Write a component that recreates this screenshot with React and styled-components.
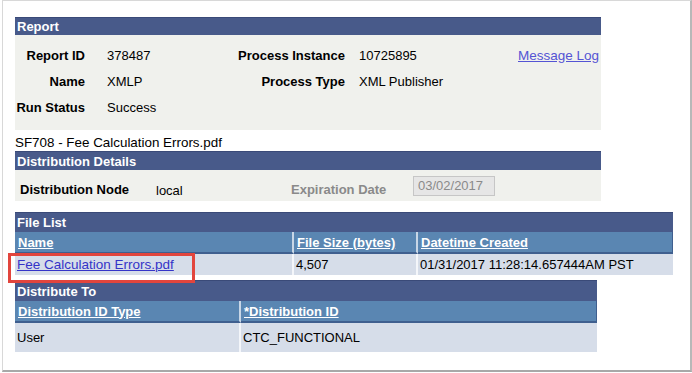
import React from "react";
import styled, { createGlobalStyle } from "styled-components";

const Global = createGlobalStyle`
  html, body { margin: 0; padding: 0; background: #ffffff; }
  body { font-family: "Liberation Sans", Arial, sans-serif; font-size: 13px; color: #000; }
`;

const Frame = styled.div`
  box-sizing: border-box;
  width: 690px;
  height: 372px;
  margin-left: 2px;
  border: 1px solid #d8d8d8;
  border-right: 2px solid #b8b8b8;
  border-bottom: 2px solid #a8a8a8;
  padding: 16px 0 0 12px;
  display: flex;
  flex-direction: column;
  position: relative;
`;

const Section = styled.div`
  width: ${(p) => p.$w}px;
`;

const Bar = styled.div`
  box-sizing: border-box;
  height: ${(p) => p.$h || 19}px;
  background: #485a8a;
  border-top: 1px solid #3a4a78;
  color: #ffffff;
  font-weight: bold;
  padding-left: 2px;
  display: flex;
  align-items: center;
`;

const Panel = styled.div`
  background: #f0f1ed;
  padding: ${(p) => p.$pad || "0"};
`;

const InfoGrid = styled.div`
  display: grid;
  grid-template-columns: 70px 122px 138px 173px auto;
  grid-auto-rows: 26px;
  align-items: center;
`;

const Label = styled.div`
  font-weight: bold;
  text-align: right;
  white-space: nowrap;
`;

const Value = styled.div`
  padding-left: ${(p) => p.$pl || 0}px;
  white-space: nowrap;
`;

const Link = styled.a`
  color: ${(p) => p.$c || "#5050d0"};
  font-size: 13.5px;
  text-decoration: underline;
  white-space: nowrap;
  cursor: pointer;
`;

const Caption = styled.div`
  margin-top: 4px;
  height: 17px;
  line-height: 17px;
  font-size: 13.4px;
`;

const DetailRow = styled.div`
  display: flex;
  align-items: flex-start;
  height: 31px;
  box-sizing: border-box;
  padding-top: 6px;
`;

const DetailLabel = styled.div`
  font-weight: bold;
  color: ${(p) => (p.$muted ? "#8a8a8a" : "#000")};
  width: ${(p) => p.$w}px;
  padding-left: ${(p) => p.$pl || 0}px;
  padding-top: 6px;
  white-space: nowrap;
  box-sizing: border-box;
`;

const DetailValue = styled.div`
  width: ${(p) => p.$w}px;
  padding-top: 7px;
`;

const DateBox = styled.div`
  box-sizing: border-box;
  width: 82px;
  height: 20px;
  background: #e6e6e6;
  border: 1px solid #c6c6c6;
  color: #8a8a8a;
  padding-left: 4px;
  line-height: 18px;
`;

const Table = styled.div`
  display: grid;
  grid-template-columns: ${(p) => p.$cols};
`;

const HeadCell = styled.div`
  box-sizing: border-box;
  height: ${(p) => p.$h}px;
  background: #5a86b2;
  border-bottom: 2px solid #3f5f8f;
  border-right: ${(p) => (p.$last ? "1px solid #3f5f8f" : "2px solid #c8d6e6")};
  padding-left: 3px;
  display: flex;
  align-items: center;
  color: #ffffff;
  font-weight: bold;
  text-decoration: underline;
  white-space: nowrap;
`;

const DataCell = styled.div`
  box-sizing: border-box;
  height: ${(p) => p.$h}px;
  background: #d6dde9;
  border-right: ${(p) => (p.$last ? "0" : "2px solid #f4f6fa")};
  padding-left: 2px;
  display: flex;
  align-items: center;
  white-space: nowrap;
`;

const Spacer = styled.div`
  height: ${(p) => p.$h}px;
  flex: none;
`;

const Highlight = styled.div`
  position: absolute;
  left: 5px;
  top: 252px;
  width: 187px;
  height: 30px;
  box-sizing: border-box;
  border: 3px solid #e2453d;
  pointer-events: none;
`;

export default function App() {
  return (
    <>
      <Global />
      <Frame>
        <Section $w={586}>
          <Bar $h={18}>Report</Bar>
          <Panel $pad="7px 0 10px 0">
            <InfoGrid>
              <Label>Report ID</Label>
              <Value $pl={22}>378487</Value>
              <Label>Process Instance</Label>
              <Value $pl={14}>10725895</Value>
              <Link $c="#5454d4">Message Log</Link>

              <Label>Name</Label>
              <Value $pl={22}>XMLP</Value>
              <Label>Process Type</Label>
              <Value $pl={14}>XML Publisher</Value>
              <span />

              <Label>Run Status</Label>
              <Value $pl={22}>Success</Value>
              <span />
              <span />
              <span />
            </InfoGrid>
          </Panel>
        </Section>

        <Caption>SF708 - Fee Calculation Errors.pdf</Caption>

        <Section $w={586}>
          <Bar>Distribution Details</Bar>
          <Panel>
            <DetailRow>
              <DetailLabel $w={141} $pl={5}>Distribution Node</DetailLabel>
              <DetailValue $w={135}>local</DetailValue>
              <DetailLabel $w={122} $muted>Expiration Date</DetailLabel>
              <DateBox>03/02/2017</DateBox>
            </DetailRow>
          </Panel>
        </Section>

        <Spacer $h={11} />

        <Section $w={658}>
          <Bar $h={20}>File List</Bar>
          <Table $cols="279px 124px 255px">
            <HeadCell $h={22}>Name</HeadCell>
            <HeadCell $h={22}>File Size (bytes)</HeadCell>
            <HeadCell $h={22} $last>Datetime Created</HeadCell>
            <DataCell $h={21}>
              <Link $c="#3434c8">Fee Calculation Errors.pdf</Link>
            </DataCell>
            <DataCell $h={21}>4,507</DataCell>
            <DataCell $h={21} $last>01/31/2017 11:28:14.657444AM PST</DataCell>
          </Table>
        </Section>

        <Spacer $h={5} />

        <Section $w={582}>
          <Bar $h={21}>Distribute To</Bar>
          <Table $cols="226px 356px">
            <HeadCell $h={22}>Distribution ID Type</HeadCell>
            <HeadCell $h={22} $last>*Distribution ID</HeadCell>
            <DataCell $h={29}>User</DataCell>
            <DataCell $h={29} $last>CTC_FUNCTIONAL</DataCell>
          </Table>
        </Section>

        <Highlight />
      </Frame>
    </>
  );
}
